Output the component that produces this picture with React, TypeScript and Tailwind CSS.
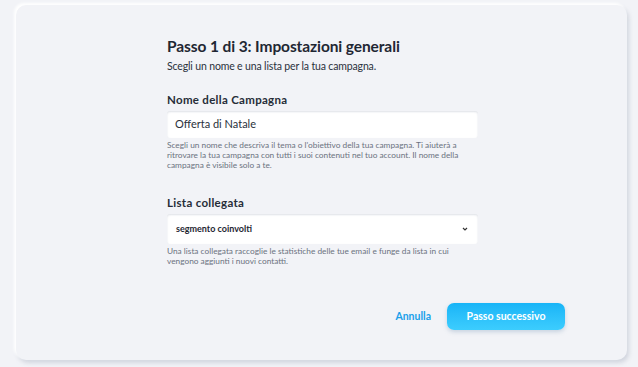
import React from "react";

export default function App() {
  return (
    <div
      className="w-[638px] h-[367px] bg-[#f2f3f7] pt-[5px] pl-[16px] overflow-hidden"
      style={{ fontFamily: "Lato, 'Noto Sans', sans-serif" }}
    >
      <div className="w-[611px] h-[355px] rounded-[10px] bg-[#f2f3f7] shadow-[-2px_-2px_3px_#ffffff,2px_3px_4px_rgba(170,178,192,0.45)] flex flex-col">
        <div className="pl-[151px] pt-[31px] w-[461px]">
          <h1 className="text-[15.5px] leading-[20px] font-bold text-[#1f2733] tracking-[-0.1px]">
            Passo 1 di 3: Impostazioni generali
          </h1>
          <p className="mt-[3px] text-[10.5px] leading-[14px] text-[#2a313c] tracking-[-0.15px]">
            Scegli un nome e una lista per la tua campagna.
          </p>

          <div className="mt-[19px] text-[11.5px] leading-[16px] font-bold text-[#262d38] tracking-[0.3px]">
            Nome della Campagna
          </div>
          <div className="mt-[3px] w-[311px] h-[27px] bg-white rounded-[3px] shadow-[inset_0_1px_2px_rgba(160,168,182,0.35)] flex items-center pl-[8px] text-[11px] text-[#2a313c]">
            Offerta di Natale
          </div>
          <p className="mt-[2px] w-[300px] text-[8.3px] leading-[10px] text-[#6b7280]">
            Scegli un nome che descriva il tema o l'obiettivo della tua campagna. Ti aiuterà a ritrovare la tua campagna con tutti i suoi contenuti nel tuo account. Il nome della campagna è visibile solo a te.
          </p>

          <div className="mt-[25px] text-[11.5px] leading-[16px] font-bold text-[#262d38] tracking-[0.3px]">
            Lista collegata
          </div>
          <div className="mt-[3px] w-[311px] h-[30px] bg-white rounded-[3px] shadow-[inset_0_1px_2px_rgba(160,168,182,0.35)] flex items-center justify-between pl-[9px] pr-[10px] text-[9px] font-bold text-[#1f2733]">
            <span>segmento coinvolti</span>
            <svg width="6" height="4" viewBox="0 0 6 4">
              <path d="M1 1 L3 3 L5 1" stroke="#333" strokeWidth="1.2" fill="none" />
            </svg>
          </div>
          <p className="mt-[2px] w-[300px] text-[8.3px] leading-[10px] text-[#6b7280]">
            Una lista collegata raccoglie le statistiche delle tue email e funge da lista in cui vengono aggiunti i nuovi contatti.
          </p>

          <div className="mt-[37px] flex items-center justify-end w-[398px] gap-[16px]">
            <button className="text-[10.5px] font-bold text-[#1aa0ea]">Annulla</button>
            <button className="w-[118px] h-[27px] rounded-[7px] bg-gradient-to-b from-[#17b4f7] to-[#3ccdfe] text-white text-[10.5px] font-bold shadow-[0_2px_4px_rgba(120,150,180,0.35)]">
              Passo successivo
            </button>
          </div>
        </div>
      </div>
    </div>
  );
}
